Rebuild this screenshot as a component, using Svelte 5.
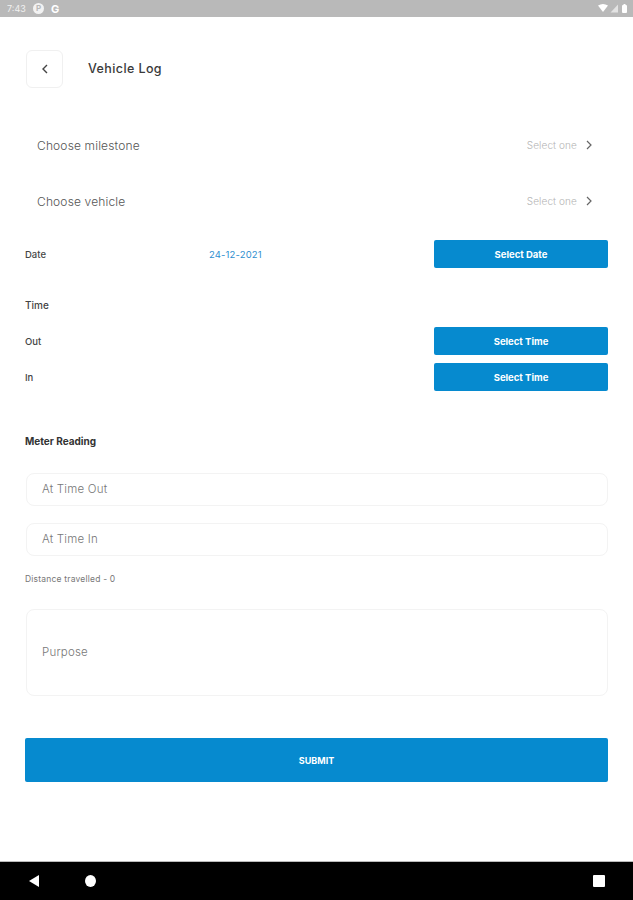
<script>
	let picks = ['Choose milestone', 'Choose vehicle'];
	let times = ['Out', 'In'];
</script>

<div class="screen">
	<div class="status">
		<span class="clock">7:43</span>
		<span class="note">P</span>
		<span class="g">G</span>
		<span class="spacer"></span>
		<svg width="30" height="11" viewBox="0 0 30 11">
			<path d="M0 2.5 Q5 -0.5 10 2.5 L5 9z" fill="#fff" />
			<path d="M20 1.5V9.5H12.5z" fill="#fff" opacity="0.6" />
			<rect x="24" y="2" width="5" height="8" rx="1" fill="#fff" />
			<rect x="25.5" y="1" width="2" height="1.5" fill="#fff" />
		</svg>
	</div>

	<main>
		<header>
			<button class="back" aria-label="Back">
				<svg width="10" height="12" viewBox="0 0 10 12"><path d="M7 2 L3 6 L7 10" fill="none" stroke="#444" stroke-width="1.4" /></svg>
			</button>
			<h1>Vehicle Log</h1>
		</header>

		<div class="picks">
			{#each picks as pick}
				<div class="pick">
					<span>{pick}</span>
					<em>Select one</em>
					<svg width="8" height="10" viewBox="0 0 8 10"><path d="M2 1 L6 5 L2 9" fill="none" stroke="#666" stroke-width="1.2" /></svg>
				</div>
			{/each}
		</div>

		<div class="row date">
			<span class="label">Date</span>
			<span class="value">24-12-2021</span>
			<button class="blue">Select Date</button>
		</div>

		<div class="time-title">Time</div>

		<div class="times">
			{#each times as t}
				<div class="row">
					<span class="label">{t}</span>
					<button class="blue">Select Time</button>
				</div>
			{/each}
		</div>

		<div class="meter">Meter Reading</div>

		<div class="field">At Time Out</div>
		<div class="field second">At Time In</div>
		<div class="distance">Distance travelled - 0</div>
		<div class="field purpose">Purpose</div>

		<button class="submit">SUBMIT</button>
	</main>

	<div class="nav">
		<svg class="tri" width="12" height="14" viewBox="0 0 12 14"><path d="M11 1V13L1 7z" fill="#fff" /></svg>
		<span class="dot"></span>
		<span class="spacer"></span>
		<span class="square"></span>
	</div>
</div>

<style>
	:global(body) {
		margin: 0;
		background: #fff;
	}
	.screen {
		width: 633px;
		height: 900px;
		display: flex;
		flex-direction: column;
		font-family: Inter, "Liberation Sans", sans-serif;
		color: #333;
		overflow: hidden;
	}
	.status {
		height: 17px;
		background: #b9b9b9;
		display: flex;
		align-items: center;
		padding: 0 5px 0 7px;
		color: #fff;
		font-size: 9px;
		box-sizing: border-box;
		flex: none;
	}
	.clock {
		width: 25px;
		opacity: 0.8;
	}
	.note {
		width: 11px;
		height: 11px;
		border-radius: 50%;
		background: #f2f2f2;
		color: #b9b9b9;
		font-size: 8px;
		font-weight: 700;
		line-height: 11px;
		text-align: center;
		margin-left: 1px;
	}
	.g {
		margin-left: 7px;
		font-size: 11px;
		font-weight: 700;
	}
	.spacer {
		flex: 1;
	}
	main {
		flex: 1;
		padding: 33px 25px 0 25px;
		box-sizing: border-box;
		display: flex;
		flex-direction: column;
	}
	header {
		display: flex;
		align-items: center;
		gap: 25px;
		height: 38px;
		padding-left: 1px;
	}
	.back {
		width: 37px;
		height: 38px;
		padding: 0;
		background: #fff;
		border: 1px solid #f0f0f0;
		border-radius: 6px;
		display: flex;
		align-items: center;
		justify-content: center;
	}
	h1 {
		margin: 0 0 1px;
		font-size: 12.5px;
		font-weight: 500;
		letter-spacing: 0.4px;
		color: #3a3a3a;
	}
	.picks {
		margin-top: 43px;
		display: flex;
		flex-direction: column;
		gap: 28px;
		padding: 0 15px 0 12px;
	}
	.pick {
		height: 28px;
		display: flex;
		align-items: center;
		font-size: 12px;
		font-weight: 300;
		color: #555;
		letter-spacing: 0.15px;
	}
	.pick span {
		flex: 1;
	}
	.pick em {
		font-style: normal;
		font-size: 10px;
		letter-spacing: 0.1px;
		color: #b4b4b4;
		margin-right: 8px;
	}
	.row {
		display: flex;
		align-items: center;
		justify-content: space-between;
		height: 28px;
		padding-right: 0;
	}
	.date {
		margin-top: 25px;
	}
	.label {
		font-size: 9.5px;
		font-weight: 500;
		color: #444;
	}
	.value {
		margin-left: 163px;
		margin-right: auto;
		font-size: 9.5px;
		color: #2f8fd0;
		letter-spacing: 0.15px;
	}
	.blue {
		width: 174px;
		height: 100%;
		padding: 0;
		border: none;
		border-radius: 2px;
		background: #068acf;
		color: #fff;
		font-family: inherit;
		font-size: 9.5px;
		font-weight: 700;
	}
	.time-title {
		margin-top: 30px;
		font-size: 10px;
		font-weight: 500;
		line-height: 14px;
		color: #444;
	}
	.times {
		margin-top: 15px;
		display: flex;
		flex-direction: column;
		gap: 8px;
	}
	.meter {
		margin-top: 43px;
		font-size: 10px;
		font-weight: 700;
		line-height: 14px;
		color: #333;
	}
	.field {
		margin-top: 25px;
		margin-left: 1px;
		height: 33px;
		box-sizing: border-box;
		border: 1px solid #f3f3f3;
		border-radius: 8px;
		padding: 0 0 2px 15px;
		display: flex;
		align-items: center;
		font-size: 11.5px;
		font-weight: 300;
		letter-spacing: 0.2px;
		color: #777;
	}
	.second {
		margin-top: 17px;
	}
	.distance {
		margin-top: 17px;
		font-size: 8.5px;
		line-height: 12px;
		color: #777;
		letter-spacing: 0.2px;
	}
	.purpose {
		margin-top: 24px;
		height: 87px;
	}
	.submit {
		margin-top: 42px;
		height: 44px;
		width: 583px;
		padding: 0;
		border: none;
		border-radius: 2px;
		background: #068acf;
		color: #fff;
		font-family: inherit;
		font-size: 9px;
		font-weight: 700;
	}
	.nav {
		height: 39px;
		flex: none;
		box-sizing: border-box;
		background: #000;
		border-top: 1px solid #bbb;
		display: flex;
		align-items: center;
		padding: 0 28px;
	}
	.tri {
		margin-right: 45px;
	}
	.dot {
		width: 11px;
		height: 12px;
		border-radius: 50%;
		background: #fff;
	}
	.square {
		width: 12px;
		height: 12px;
		border-radius: 1px;
		background: #fff;
	}
</style>
